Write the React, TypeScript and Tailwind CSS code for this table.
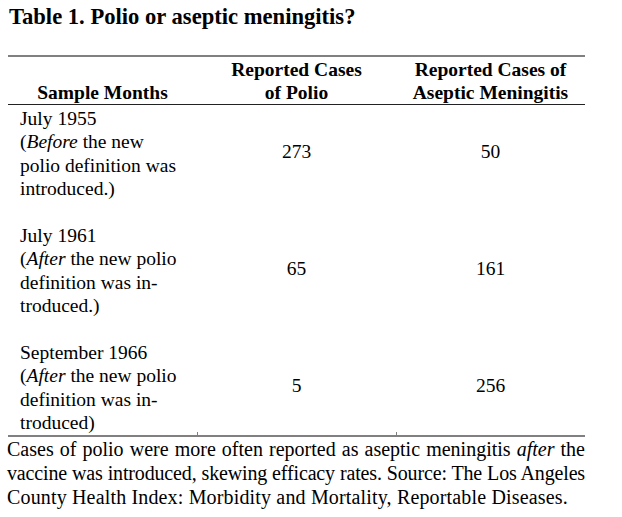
const rows = [
  {
    month: "July 1955",
    note: (
      <>
        (<i>Before</i> the new
        <br />
        polio definition was
        <br />
        introduced.)
      </>
    ),
    polio: "273",
    aseptic: "50",
  },
  {
    month: "July 1961",
    note: (
      <>
        (<i>After</i> the new polio
        <br />
        definition was in-
        <br />
        troduced.)
      </>
    ),
    polio: "65",
    aseptic: "161",
  },
  {
    month: "September 1966",
    note: (
      <>
        (<i>After</i> the new polio
        <br />
        definition was in-
        <br />
        troduced)
      </>
    ),
    polio: "5",
    aseptic: "256",
  },
];

export default function App() {
  return (
    <div className="w-[622px] h-[517px] bg-white text-black font-['Liberation_Serif',serif]">
      <h1 className="pl-[9px] pt-[3px] text-[22.6px] font-bold leading-[28px]">
        Table 1. Polio or aseptic meningitis?
      </h1>

      <div className="ml-[8px] mt-[24px] w-[577px]">
        <div className="h-[2px] bg-[#808080]" />
        <div className="grid grid-cols-[189px_199px_189px] border-b-[1.5px] border-[#222] pt-[2px] text-[19.5px] font-bold leading-[22.5px]">
          <div className="self-end text-center">Sample Months</div>
          <div className="text-center">
            Reported Cases
            <br />
            of Polio
          </div>
          <div className="text-center">
            Reported Cases of
            <br />
            Aseptic Meningitis
          </div>
        </div>

        <div className="pt-[2px] text-[19.5px] leading-[23.4px]">
          {rows.map((r) => (
            <div key={r.month} className="grid grid-cols-[189px_199px_189px] pb-[23.4px] last:pb-0">
              <div className="pl-[12px]">
                {r.month}
                <br />
                {r.note}
              </div>
              <div className="flex items-center justify-center pb-[4px]">{r.polio}</div>
              <div className="flex items-center justify-center pb-[4px]">{r.aseptic}</div>
            </div>
          ))}
        </div>

        <div className="relative h-[2px] bg-[#808080]">
          <div className="absolute left-[189px] -top-[3px] h-[3px] w-px bg-[#808080]" />
          <div className="absolute left-[388px] -top-[3px] h-[3px] w-px bg-[#808080]" />
        </div>
      </div>

      <div className="ml-[7px] w-[578px] text-[20px] leading-[24px]">
        <p className="text-justify [text-align-last:justify]">
          Cases of polio were more often reported as aseptic meningitis <i>after</i> the
        </p>
        <p className="text-justify [text-align-last:justify] tracking-[-0.15px]">
          vaccine was introduced, skewing efficacy rates. Source: The Los Angeles
        </p>
        <p className="tracking-[0.16px]">County Health Index: Morbidity and Mortality, Reportable Diseases.</p>
      </div>
    </div>
  );
}
